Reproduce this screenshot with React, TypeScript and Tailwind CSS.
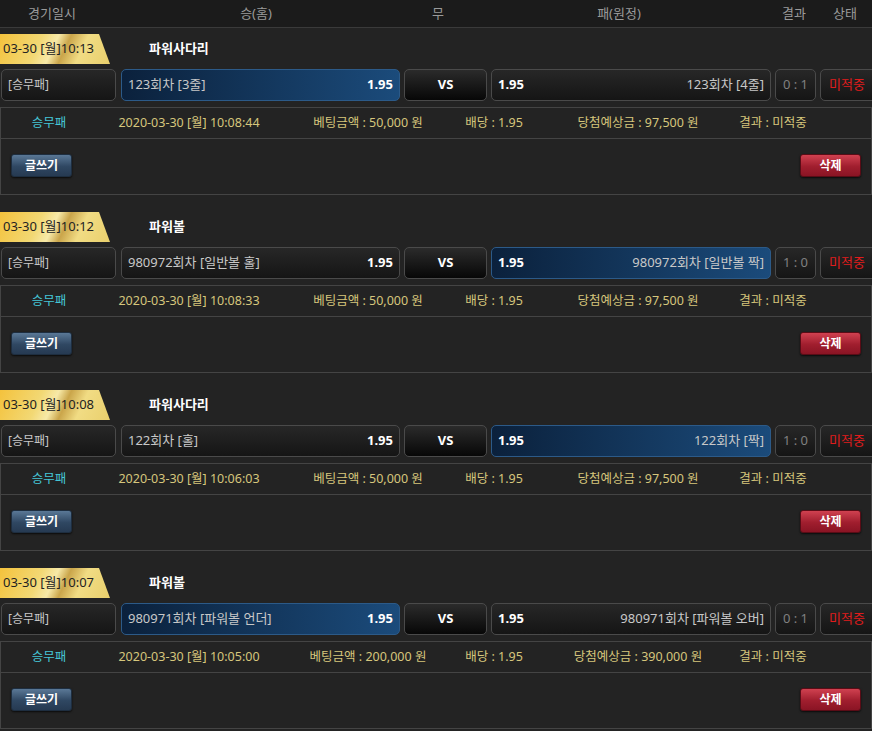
import React from "react";

type Bet = {
  time: string;
  game: string;
  home: string;
  away: string;
  pick: "home" | "away";
  score: string;
  date: string;
  amount: string;
  win: string;
};

const bets: Bet[] = [
  {
    time: "03-30 [월]10:13",
    game: "파워사다리",
    home: "123회차 [3줄]",
    away: "123회차 [4줄]",
    pick: "home",
    score: "0 : 1",
    date: "2020-03-30 [월] 10:08:44",
    amount: "50,000",
    win: "97,500",
  },
  {
    time: "03-30 [월]10:12",
    game: "파워볼",
    home: "980972회차 [일반볼 홀]",
    away: "980972회차 [일반볼 짝]",
    pick: "away",
    score: "1 : 0",
    date: "2020-03-30 [월] 10:08:33",
    amount: "50,000",
    win: "97,500",
  },
  {
    time: "03-30 [월]10:08",
    game: "파워사다리",
    home: "122회차 [홀]",
    away: "122회차 [짝]",
    pick: "away",
    score: "1 : 0",
    date: "2020-03-30 [월] 10:06:03",
    amount: "50,000",
    win: "97,500",
  },
  {
    time: "03-30 [월]10:07",
    game: "파워볼",
    home: "980971회차 [파워볼 언더]",
    away: "980971회차 [파워볼 오버]",
    pick: "home",
    score: "0 : 1",
    date: "2020-03-30 [월] 10:05:00",
    amount: "200,000",
    win: "390,000",
  },
];

const boxBase = "h-full rounded-[5px] border flex items-center shrink-0";
const boxDark = "border-[#4a4a4a] bg-[linear-gradient(#272727,#151515)]";
const boxPicked = "border-[#2c5a88] bg-[linear-gradient(90deg,#0b213c,#1b4b7b)]";

function BetBlock({ bet }: { bet: Bet }) {
  return (
    <div className="pt-[6px] pb-[11px]">
      {/* date tag + game name */}
      <div className="flex items-center h-[30px]">
        <div className="w-[110px] h-full flex items-center pl-[3px] text-[13px] text-[#222] [clip-path:polygon(0_0,99px_0,110px_100%,0_100%)] bg-[linear-gradient(115deg,#f4c23c_0%,#f2d874_35%,#f7e9a8_48%,#caa54a_58%,#f1dc84_72%,#e9cf6c_100%)]">
          {bet.time}
        </div>
        <div className="ml-[39px] text-[13px] font-bold text-white">{bet.game}</div>
      </div>

      {/* bet row */}
      <div className="flex h-[32px] mt-[5px] pl-[1px] text-[13px]">
        <div className={`${boxBase} ${boxDark} w-[115px] pl-[6px] text-[12px] text-[#c8c8c8]`}>[승무패]</div>
        <div
          className={`${boxBase} ${bet.pick === "home" ? boxPicked : boxDark} ml-[5px] w-[279px] px-[6px] justify-between`}
        >
          <span className="text-[#c8c8c8]">{bet.home}</span>
          <span className="font-bold text-white">1.95</span>
        </div>
        <div
          className={`${boxBase} ml-[4px] w-[83px] justify-center border-[#4a4a4a] bg-[linear-gradient(#2b2b2b,#070707)] font-bold text-white`}
        >
          VS
        </div>
        <div
          className={`${boxBase} ${bet.pick === "away" ? boxPicked : boxDark} ml-[4px] w-[280px] px-[6px] justify-between`}
        >
          <span className="font-bold text-white">1.95</span>
          <span className="text-[#c8c8c8]">{bet.away}</span>
        </div>
        <div className={`${boxBase} ${boxDark} ml-[4px] w-[41px] justify-center text-[#808080]`}>{bet.score}</div>
        <div className={`${boxBase} ${boxDark} ml-[4px] w-[58px] pl-[8px] text-[#e01c1c]`}>미적중</div>
      </div>

      {/* info box */}
      <div className="mt-[6px] border border-[#444] h-[88px] flex flex-col">
        <div className="h-[31px] flex items-center text-[12.5px] text-[#d6c67c] border-b border-[#444] whitespace-nowrap">
          <div className="w-[96px] flex justify-center text-[#45c6d6]">승무패</div>
          <div className="w-[184px] flex justify-center">{bet.date}</div>
          <div className="w-[174px] flex justify-center">베팅금액 : {bet.amount} 원</div>
          <div className="w-[78px] flex justify-center">배당 : 1.95</div>
          <div className="w-[210px] flex justify-center">당첨예상금 : {bet.win} 원</div>
          <div className="w-[60px] flex justify-center">결과 : 미적중</div>
        </div>
        <div className="flex-1 flex items-start justify-between pt-[15px] px-[10px]">
          <button className="w-[61px] h-[23px] rounded-[3px] text-[12px] font-bold text-white bg-[linear-gradient(#5a7896,#2f4762_55%,#263a52)] shadow-[0_1px_2px_rgba(0,0,0,0.7)] border border-[#1e2e40]">
            글쓰기
          </button>
          <button className="w-[61px] h-[23px] rounded-[3px] text-[12px] font-bold text-white bg-[linear-gradient(#d04150,#a01e2e_55%,#8a1424)] shadow-[0_1px_2px_rgba(0,0,0,0.7)] border border-[#5a0c16]">
            삭제
          </button>
        </div>
      </div>
    </div>
  );
}

export default function App() {
  return (
    <div
      className="w-[872px] h-[731px] overflow-hidden bg-[#232323]"
      style={{ fontFamily: '"Noto Sans", "Noto Sans CJK KR", sans-serif' }}
    >
      {/* header */}
      <div className="h-[28px] bg-[#1b1b1b] border-b border-[#3a3a3a] flex items-center text-[13px] text-[#9a9a9a] whitespace-nowrap">
        <div className="w-[104px] flex justify-center">경기일시</div>
        <div className="w-[304px] flex justify-center">승(홈)</div>
        <div className="w-[60px] flex justify-center">무</div>
        <div className="w-[302px] flex justify-center">패(원정)</div>
        <div className="w-[48px] flex justify-center">결과</div>
        <div className="w-[54px] flex justify-center">상태</div>
      </div>

      {bets.map((b, i) => (
        <BetBlock key={i} bet={b} />
      ))}
    </div>
  );
}
